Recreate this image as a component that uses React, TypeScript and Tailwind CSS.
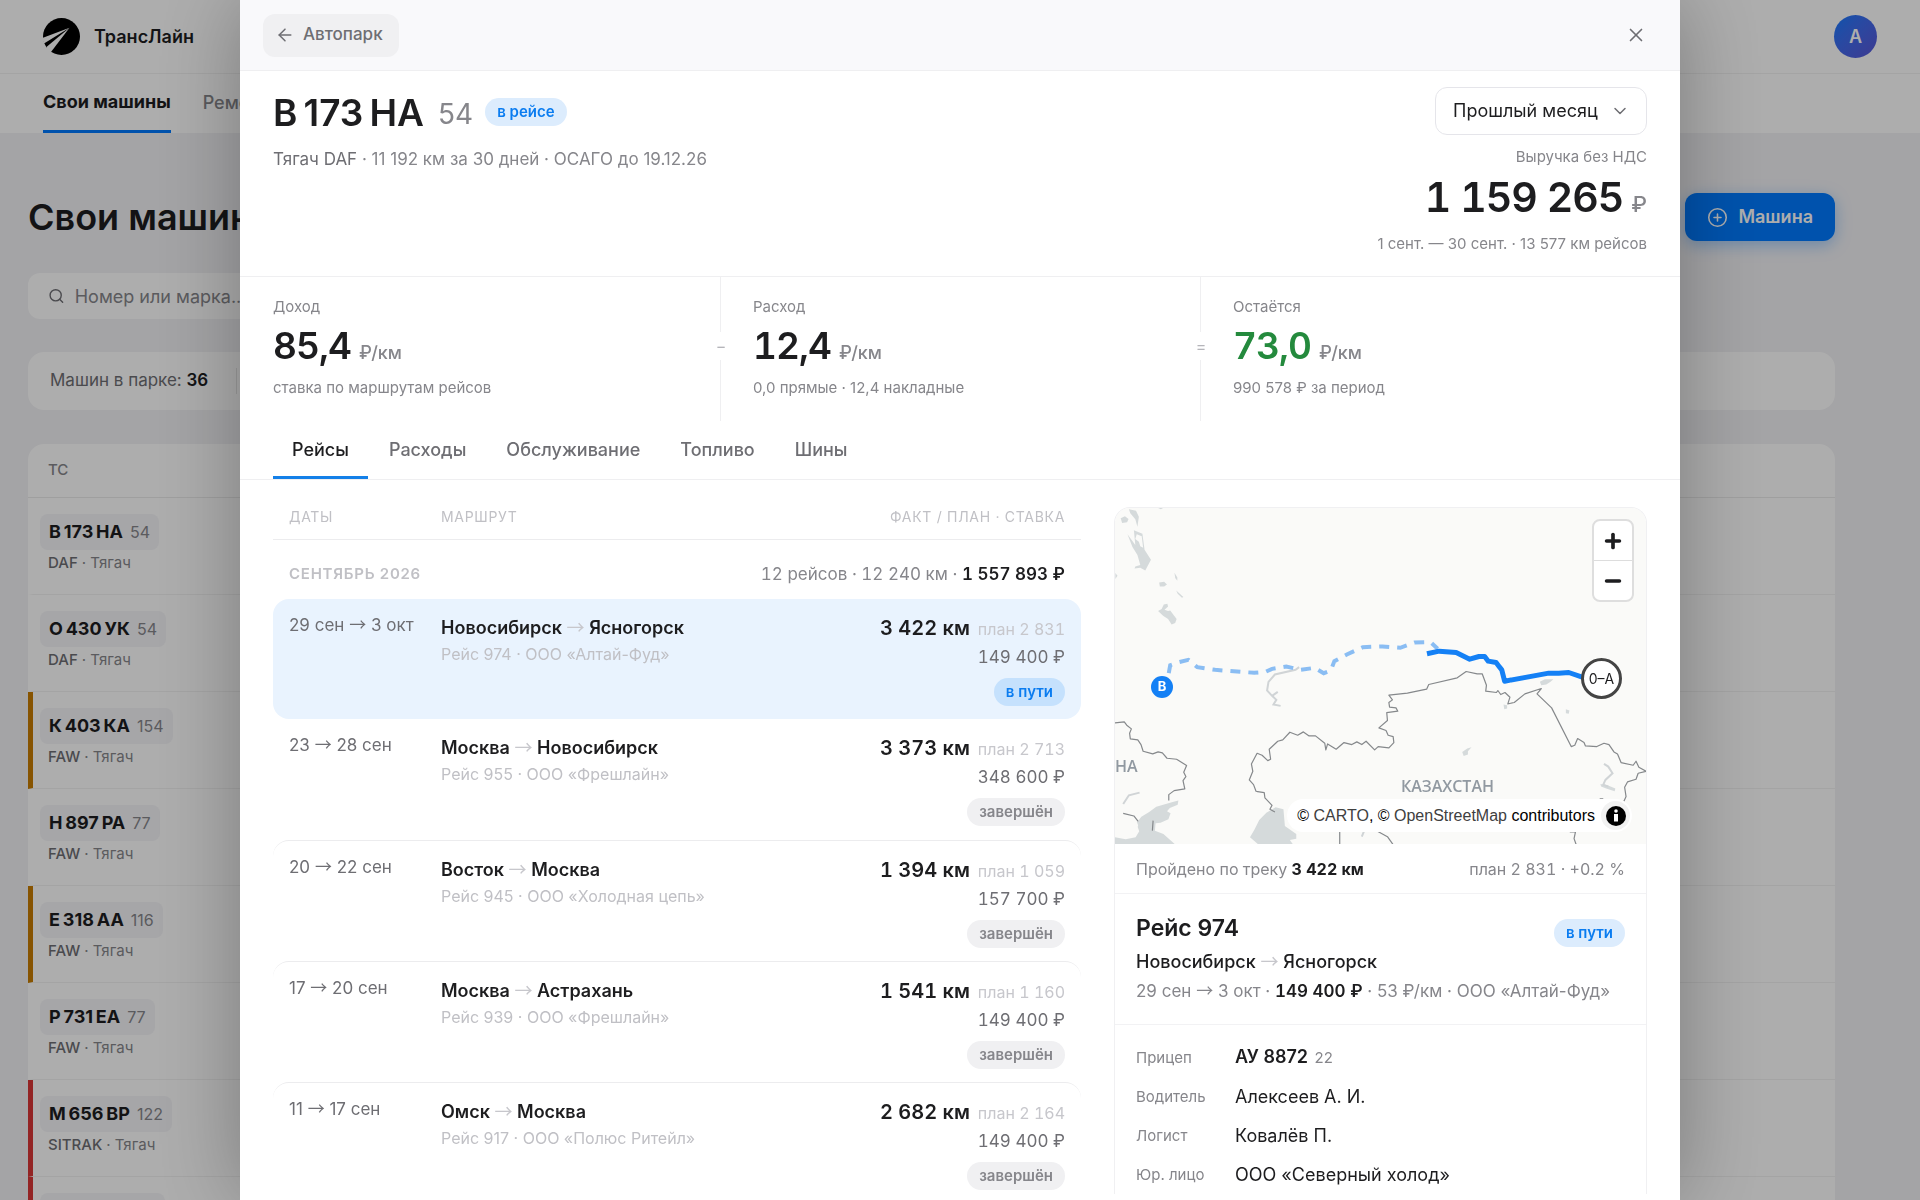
import { ArrowLeft, ChevronDown, CirclePlus, Minus, Plus, Search, X } from "lucide-react";

type Accent = "none" | "amber" | "red";

type Vehicle = {
  plate: string;
  region: string;
  brand: string;
  accent: Accent;
};

type Trip = {
  id: number;
  dates: [string, string];
  from: string;
  to: string;
  client: string;
  fact: string;
  plan: string;
  price: string;
  active?: boolean;
};

const vehicles: Vehicle[] = [
  { plate: "В\u2009173\u2009НА", region: "54", brand: "DAF", accent: "none" },
  { plate: "О\u2009430\u2009УК", region: "54", brand: "DAF", accent: "none" },
  { plate: "К\u2009403\u2009КА", region: "154", brand: "FAW", accent: "amber" },
  { plate: "Н\u2009897\u2009РА", region: "77", brand: "FAW", accent: "none" },
  { plate: "Е\u2009318\u2009АА", region: "116", brand: "FAW", accent: "amber" },
  { plate: "Р\u2009731\u2009ЕА", region: "77", brand: "FAW", accent: "none" },
  { plate: "М\u2009656\u2009ВР", region: "122", brand: "SITRAK", accent: "red" },
  { plate: "Т\u2009208\u2009ОС", region: "54", brand: "SITRAK", accent: "red" },
];

const trips: Trip[] = [
  { id: 974, dates: ["29 сен", "3 окт"], from: "Новосибирск", to: "Ясногорск", client: "ООО «Алтай-Фуд»", fact: "3 422", plan: "2 831", price: "149 400", active: true },
  { id: 955, dates: ["23", "28 сен"], from: "Москва", to: "Новосибирск", client: "ООО «Фрешлайн»", fact: "3 373", plan: "2 713", price: "348 600" },
  { id: 945, dates: ["20", "22 сен"], from: "Восток", to: "Москва", client: "ООО «Холодная цепь»", fact: "1 394", plan: "1 059", price: "157 700" },
  { id: 939, dates: ["17", "20 сен"], from: "Москва", to: "Астрахань", client: "ООО «Фрешлайн»", fact: "1 541", plan: "1 160", price: "149 400" },
  { id: 917, dates: ["11", "17 сен"], from: "Омск", to: "Москва", client: "ООО «Полюс Ритейл»", fact: "2 682", plan: "2 164", price: "149 400" },
];

const stats = [
  { label: "Доход", value: "85,4", note: "ставка по маршрутам рейсов", color: "text-[#1d1d1f]", sign: "" },
  { label: "Расход", value: "12,4", note: "0,0 прямые · 12,4 накладные", color: "text-[#1d1d1f]", sign: "−" },
  { label: "Остаётся", value: "73,0", note: "990 578 ₽ за период", color: "text-[#248a3d]", sign: "=" },
];

const tabs = ["Рейсы", "Расходы", "Обслуживание", "Топливо", "Шины"];

const accentBar: Record<Accent, string> = {
  none: "border-l-transparent",
  amber: "border-l-[#c77c02]",
  red: "border-l-[#d93636]",
};

function Logo() {
  return (
    <svg viewBox="0 0 37 37" className="size-[37px]" aria-hidden="true">
      <circle cx="18.5" cy="18.5" r="18.5" fill="#000" />
      <path d="M-1 20 26.500 9.800 1 25.500Z" fill="#fff" />
      <path d="M26.500 9.800 4 28.500 0 37 8 34Z" fill="#fff" />
    </svg>
  );
}

function Arrow({ muted }: { muted?: boolean }) {
  return (
    <span className={`font-['Noto_Sans_CJK_JP',sans-serif] leading-none font-normal ${muted ? "text-[#c7c7cc]" : ""}`}>→</span>
  );
}

function StatusBadge({ active, label, strong }: { active: boolean; label: string; strong?: boolean }) {
  const tone = active
    ? strong
      ? "bg-[#c5e1fd] text-[#0a7cf0]"
      : "bg-[#dcecfd] text-[#0a7cf0]"
    : "bg-[#f0f0f2] text-[#86868b]";
  return (
    <span className={`inline-flex h-7 items-center rounded-full px-3 text-[15px] font-semibold ${tone}`}>
      {label}
    </span>
  );
}

function FleetPage() {
  return (
    <div className="h-screen overflow-hidden bg-[#f2f2f5]">
      <header className="flex h-[74px] items-center justify-between border-b border-black/5 bg-white px-[43px]">
        <div className="flex items-center gap-3.5">
          <Logo />
          <span className="text-lg font-semibold">ТрансЛайн</span>
        </div>
        <button className="size-[43px] rounded-full bg-linear-135 from-[#007aff] to-[#5856d6] text-lg font-semibold text-white">
          А
        </button>
      </header>
      <nav className="flex h-[59px] gap-8 bg-white px-[43px] text-lg">
        <a href="#cars" className="flex items-center border-b-3 border-[#007aff] font-bold">Свои машины</a>
        <a href="#repairs" className="flex items-center pb-0.5 font-medium text-[#86868b]">Ремонты</a>
      </nav>

      <main className="pt-[60px] pr-[85px] pl-7">
        <div className="flex h-12 items-center justify-between">
          <h1 className="text-4xl font-semibold">Свои машины</h1>
          <button className="flex h-12 items-center gap-2.5 rounded-xl bg-[#007aff] px-[22px] text-lg font-semibold text-white shadow-[0_4px_16px_rgba(0,122,255,0.35)]">
            <CirclePlus className="size-[21px]" strokeWidth={1.8} />
            Машина
          </button>
        </div>
        <label className="mt-8 flex h-[46px] w-[420px] items-center gap-2.5 rounded-xl bg-white px-5">
          <Search className="size-[18px] text-[#6e6e73]" />
          <input
            type="search"
            aria-label="Поиск машины"
            placeholder="Номер или марка..."
            className="w-full pt-0.5 text-lg outline-none placeholder:text-[#86868b]"
          />
        </label>
        <div className="mt-[33px] flex h-[58px] items-center rounded-2xl bg-white px-[22px] text-[17px] text-[#6e6e73]">
          <span className="border-r border-black/10 pr-7">
            Машин в парке: <b className="font-semibold text-[#1d1d1f]">36</b>
          </span>
        </div>
        <table className="mt-[34px] w-full border-separate border-spacing-0 overflow-hidden rounded-t-2xl bg-white">
          <thead>
            <tr>
              <th className="h-[54px] border-b border-black/8 pl-5 text-left text-[15px] font-medium text-[#86868b]">ТС</th>
            </tr>
          </thead>
          <tbody>
            {vehicles.map((v) => (
              <tr key={v.plate}>
                <td className={`h-[97px] border-b border-l-5 border-b-black/5 pl-[7px] align-top ${accentBar[v.accent]}`}>
                  <span className="mt-4 inline-flex h-9 items-center gap-[7px] rounded-lg bg-[#f5f5f8] px-[9px]">
                    <span className="text-lg font-bold">{v.plate}</span>
                    <span className="text-base text-[#86868b]">{v.region}</span>
                  </span>
                  <div className="pl-2 text-[15px] leading-[26px] font-medium text-[#6e6e73]">
                    {v.brand} <span className="font-normal text-[#86868b]">· Тягач</span>
                  </div>
                </td>
              </tr>
            ))}
          </tbody>
        </table>
      </main>
    </div>
  );
}

function RouteMap() {
  return (
    <div className="relative h-[336px] overflow-hidden bg-[#fafaf8]">
      <svg viewBox="39 53 1491 1007" preserveAspectRatio="none" className="size-full" aria-label="Карта маршрута">
        {/* Lakes and seas */}
        <g fill="#d5dadb">
          <path d="M78 57l20 4 8 18-4 30-6-22-14-18zM55 84l12-6 10 8-4 10-14 2zM92 120l24 10 6 48 18 30-16 32-14-8-16 2 2-6 14-4-8-30-14-24-14-38 22 32zM163 276l14-2 8 8-8 6-12 0zM206 247l8 14 0 10-6-8zM211 300l20 20-4 2-12-12zM160 362l10-6 6-14 10-2 2 8-10 10 10 4 6-2 18 26-4 12-10 4-10-16-14-10zM40 248l6 8-6 10zM160 53l14 0-6 4z" />
          <path d="M39 1060V1040l30 6 28-6 10-18-8-24 14-20 22-14 20-16 46-14 16-4-2 12-22 10-8 10 10 6-6 18-22 10-14 2-2 22 24 10 42 40z" />
          <path d="M418 1040l12-22 14-30 20-22 26-16 22 6 4 50 32 24 0 14-18 4 8 12H440z" />
          <path d="M1232 574l14-8 24 0-8 8-12 8-14 2zM1130 642l10 2 0 10-8 2zM1305 656l10 4-2 10-8-2zM1014 784l14-10 12-4-10 12 0 10-12 4zM1402 880l20 4 22 10-2 8-24-8-14-6z" />
        </g>
        {/* White spots inside the water */}
        <path d="M100 132l14 6 4 34-8-4-4-14-10-8zM50 990l20-14 26 6 8 22-8 22-20 14-18-8 6-22z" fill="#fafaf8" />
        <g fill="none" stroke="#d0d4d6" strokeWidth="2">
          <path vectorEffect="non-scaling-stroke" d="M556 530l-10 8-58 14-18 22-4 26 14 16 12 12-8 14 20 4M480 616l16-12M62 940l16-26 30-8M1412 820l12 8 12 20-20 20-6 14 14 6M732 1038l6-16" />
        </g>
        {/* Borders */}
        <g fill="none" stroke="#85888b" strokeWidth="1.2" strokeLinejoin="round">
          <path
            vectorEffect="non-scaling-stroke"
            d="M39 697L65 694 72 704 85 715 80 728 82 745 103 748 112 762 118 782 145 790 160 784 172 787 185 803 212 806 240 825 232 845 238 858 230 870 235 895 205 900 190 912 190 930M62 968L92 976 104 992M146 990L144 1020"
          />
          <path
            vectorEffect="non-scaling-stroke"
            d="M488 964L474 956 480 944 460 922 458 906 435 902 428 882 416 868 426 842 422 820 438 788 452 794 468 810 476 806 472 776 496 752 510 748 530 725 552 734 568 724 584 736 602 736 628 758 631 778 636 760 660 776 682 756 704 762 718 754 732 762 744 752 768 778 778 768 808 772 822 756 820 738 806 734 800 720 780 712 804 690 802 666 833 662 828 652 810 650 808 636 818 628 808 614 860 608 914 596 920 582 1000 562 1025 543 1056 550 1070 550 1082 584 1080 602 1110 606 1114 600 1122 612 1134 606 1148 620 1142 640 1160 636 1190 610 1236 594 1224 610 1265 652 1320 768 1330 764 1338 744 1356 756 1360 766 1392 768 1412 758 1426 762 1440 784 1450 790 1460 816 1494 824 1502 812 1510 830 1530 842 1508 848 1502 866 1478 874 1470 890 1474 918 1468 932"
          />
          <path vectorEffect="non-scaling-stroke" d="M670 1022v40M776 1022l28 16 16 24M1316 1024h16l-4 20 6 18M1400 925h10" />
        </g>
        {/* Planned and driven track */}
        <path
          vectorEffect="non-scaling-stroke"
          d="M190 548L194 524 215 516 245 508 270 530 320 538 430 547 462 544 480 535 520 528 560 538 600 532 625 548 645 540 655 512 690 492 735 470 790 468 840 472 880 456 925 455 945 475"
          fill="none"
          stroke="#8abdf3"
          strokeWidth="4"
          strokeDasharray="10 8"
        />
        <path
          vectorEffect="non-scaling-stroke"
          d="M915 490l34-8 48 4 38 20 26-8 16 0 10 14 22 4 10 14 6 8 8 34 124-24 28 0 28-2 44 16"
          fill="none"
          stroke="#1480f5"
          strokeWidth="5"
          strokeLinejoin="round"
        />
      </svg>

      <span className="absolute top-[168px] left-9 flex size-[22px] items-center justify-center rounded-full bg-[#1480f5] text-[13px] font-bold text-white">B</span>
      <span className="absolute top-[150px] right-6 flex size-[41px] items-center justify-center rounded-full border-3 border-[#444] bg-white text-sm">0–A</span>
      <span className="absolute top-[246px] left-0 font-['Open_Sans',sans-serif] text-base font-semibold text-[#9199a1]">НА</span>
      <span className="absolute top-[266px] left-[286px] font-['Open_Sans',sans-serif] text-base font-semibold text-[#9199a1]">КАЗАХСТАН</span>

      <div className="absolute top-[11px] right-3 flex w-[42px] flex-col rounded-lg border-2 border-[#dedede] bg-white">
        <button aria-label="Приблизить" className="flex h-10 items-center justify-center border-b border-[#ddd]">
          <Plus className="size-[22px]" strokeWidth={4} />
        </button>
        <button aria-label="Отдалить" className="flex h-[39px] items-center justify-center">
          <Minus className="size-[22px]" strokeWidth={4} />
        </button>
      </div>

      <div className="absolute right-3.5 bottom-3 flex h-[33px] items-center gap-1.5 rounded-full bg-white pr-0.5 pl-2.5 font-['Liberation_Sans',sans-serif] text-base text-black">
        <span>
          © <a href="#carto" className="text-[#404040]">CARTO</a>, © <a href="#osm" className="text-[#404040]">OpenStreetMap</a> contributors
        </span>
        <span className="flex size-[29px] items-center justify-center rounded-full bg-[#f2f2f2]">
          <svg viewBox="0 0 20 20" className="size-5" aria-hidden="true">
            <circle cx="10" cy="10" r="10" />
            <circle cx="10" cy="5" r="1.8" fill="#fff" />
            <path d="M8 8h4v7.500h-4z" fill="#fff" />
          </svg>
        </span>
      </div>
    </div>
  );
}

function TripCard() {
  return (
    <aside className="overflow-hidden rounded-t-2xl border border-b-0 border-[#f0f0f2]">
      <RouteMap />
      <div className="flex h-[50px] items-center justify-between border-b border-[#f2f2f4] px-[21px] text-base text-[#86868b] tabular-nums">
        <span>
          Пройдено по треку <b className="font-bold text-[#1d1d1f]">3 422 км</b>
        </span>
        <span>план 2 831 · +0.2 %</span>
      </div>
      <div className="border-b border-[#f2f2f4] px-[21px] pt-4 pb-[18px]">
        <div className="flex items-end justify-between">
          <h2 className="text-[23px] leading-[37px] font-semibold">Рейс 974</h2>
          <StatusBadge active label="в пути" />
        </div>
        <div className="text-lg leading-[30px] font-medium">
          Новосибирск <Arrow muted /> Ясногорск
        </div>
        <div className="text-[17px] leading-[29px] whitespace-nowrap text-[#86868b]">
          29 сен <Arrow /> 3 окт · <b className="font-semibold text-[#1d1d1f] tabular-nums">149 400 ₽</b> · 53 ₽/км · ООО «Алтай-Фуд»
        </div>
      </div>
      <dl className="grid grid-cols-[99px_1fr] items-center px-[21px] pt-3 text-lg leading-[39px]">
        <dt className="text-[15px] text-[#86868b]">Прицеп</dt>
        <dd className="font-semibold">
          АУ 8872 <span className="ml-0.5 text-[15px] font-normal text-[#86868b]">22</span>
        </dd>
        <dt className="text-[15px] text-[#86868b]">Водитель</dt>
        <dd>Алексеев А. И.</dd>
        <dt className="text-[15px] text-[#86868b]">Логист</dt>
        <dd>Ковалёв П.</dd>
        <dt className="text-[15px] text-[#86868b]">Юр. лицо</dt>
        <dd>ООО «Северный холод»</dd>
      </dl>
    </aside>
  );
}

function TripsTable() {
  return (
    <table className="w-full table-fixed border-separate border-spacing-0">
      <colgroup>
        <col className="w-[152px]" />
        <col />
        <col className="w-[340px]" />
      </colgroup>
      <thead>
        <tr className="h-[33px] text-left align-top text-sm tracking-wider text-[#c0c0c5] uppercase">
          <th className="border-b border-[#ececee] pl-4 font-normal">Даты</th>
          <th className="border-b border-[#ececee] pl-4 font-normal">Маршрут</th>
          <th className="border-b border-[#ececee] pr-4 text-right font-normal">Факт / План · Ставка</th>
        </tr>
      </thead>
      <tbody>
        <tr className="h-[59px]">
          <td colSpan={2} className="pt-2.5 pl-4 text-[15px] font-semibold tracking-wider text-[#c0c0c5] uppercase">
            Сентябрь 2026
          </td>
          <td className="pt-2.5 pr-4 text-right text-[17px] whitespace-nowrap text-[#86868b] tabular-nums">
            12 рейсов · 12 240 км · <b className="font-semibold text-[#1d1d1f]">1 557 893 ₽</b>
          </td>
        </tr>
        {trips.map((trip, i) => {
          const cell = trip.active ? "bg-[#e9f3fe]" : i > 1 ? "border-t border-[#ececee]" : "";
          return (
            <tr key={trip.id} className={`align-top ${trip.active ? "h-[120px]" : "h-[121px]"}`}>
              <td className={`rounded-l-2xl pt-3.5 pl-4 text-[17px] leading-6 whitespace-nowrap text-[#6e6e73] ${cell}`}>
                {trip.dates[0]} <Arrow /> {trip.dates[1]}
              </td>
              <td className={`pt-4 pl-4 ${cell}`}>
                <div className="text-lg leading-[26px] font-semibold">
                  {trip.from} <Arrow muted /> {trip.to}
                </div>
                <div className="text-base leading-[26px] text-[#c0c0c5]">
                  Рейс {trip.id} · {trip.client}
                </div>
              </td>
              <td className={`rounded-r-2xl pt-3.5 pr-4 text-right tabular-nums ${cell}`}>
                <div className="leading-[30px] text-[#c7c7cc]">
                  <b className="mr-2 text-xl leading-[30px] font-semibold text-[#1d1d1f]">{trip.fact} км</b>
                  план {trip.plan}
                </div>
                <div className="mb-2 text-[17px] leading-[26px] text-[#6e6e73]">{trip.price} ₽</div>
                <StatusBadge active={!!trip.active} strong label={trip.active ? "в пути" : "завершён"} />
              </td>
            </tr>
          );
        })}
      </tbody>
    </table>
  );
}

function VehicleDialog() {
  return (
    <div className="fixed inset-0 flex justify-center bg-black/32">
      <div
        role="dialog"
        aria-modal="true"
        aria-label="В 173 НА 54"
        className="h-full w-3/4 overflow-hidden bg-white shadow-[0_0_80px_rgba(0,0,0,0.3)]"
      >
        <div className="flex h-[71px] items-center justify-between border-b border-[#efeff1] bg-[#f9f9fb] pr-[33px] pl-[23px]">
          <button className="flex h-[43px] items-center gap-2 rounded-xl bg-[#f0f0f2] px-3 pr-4 text-[17px] font-medium text-[#6e6e73]">
            <ArrowLeft className="size-5" strokeWidth={1.8} />
            Автопарк
          </button>
          <button aria-label="Закрыть" className="text-[#6e6e73]">
            <X className="size-[22px]" strokeWidth={1.8} />
          </button>
        </div>

        <div className="flex h-[206px] justify-between border-b border-[#efeff1] px-[33px] pt-4">
          <div className="pt-0.5">
            <div className="flex items-center">
              <h1 className="text-[37px] leading-[45px] font-semibold">В&#8201;173&#8201;НА</h1>
              <span className="ml-3.5 pt-1 text-[28px] text-[#86868b]">54</span>
              <span className="ml-3 flex">
                <StatusBadge active label="в рейсе" />
              </span>
            </div>
            <p className="mt-3 text-[17px] leading-6 text-[#86868b]">
              <span className="text-[#6e6e73]">Тягач DAF</span> · 11 192 км за 30 дней · ОСАГО до 19.12.26
            </p>
          </div>
          <div className="flex flex-col items-end text-[15px] text-[#86868b]">
            <div className="relative">
              <select
                aria-label="Период"
                className="h-12 w-[212px] appearance-none rounded-xl border border-[#e5e5ea] bg-white pl-[17px] text-lg text-[#1d1d1f]"
              >
                <option>Прошлый месяц</option>
                <option>Текущий месяц</option>
              </select>
              <ChevronDown className="pointer-events-none absolute top-3.5 right-[17px] size-5 text-[#6e6e73]" strokeWidth={1.8} />
            </div>
            <div className="mt-2.5 leading-6">Выручка без НДС</div>
            <div className="flex items-baseline gap-2 leading-[56px]">
              <span className="text-[41px] font-semibold tracking-tight text-[#1d1d1f] tabular-nums">1 159 265</span>
              <span className="text-[22px] font-medium">₽</span>
            </div>
            <div className="leading-6">1 сент. — 30 сент. · 13 577 км рейсов</div>
          </div>
        </div>

        <div className="grid h-36 grid-cols-3">
          {stats.map((s) => (
            <div key={s.label} className="relative border-l border-[#efeff1] pt-[18px] pl-8 text-[15px] text-[#86868b] first:border-l-transparent">
              {s.sign && (
                <span className="absolute top-[55px] -left-2 flex h-7 w-4 items-center justify-center bg-white text-base text-[#b5b5ba]">
                  {s.sign}
                </span>
              )}
              <div className="leading-6">{s.label}</div>
              <div className="flex items-baseline gap-2 leading-[54px]">
                <span className={`text-[37px] font-semibold tracking-tight tabular-nums ${s.color}`}>{s.value}</span>
                <span className="text-lg font-medium">₽/км</span>
              </div>
              <div className="leading-[30px]">{s.note}</div>
            </div>
          ))}
        </div>

        <div role="tablist" className="flex h-[59px] gap-0.5 border-b border-[#efeff1] px-[33px]">
          {tabs.map((tab, i) => (
            <button
              key={tab}
              role="tab"
              aria-selected={i === 0}
              className={`border-b-3 px-[19px] pt-0.5 text-lg font-medium ${
                i === 0 ? "border-[#1480e8] text-[#1d1d1f]" : "border-transparent text-[#6e6e73]"
              }`}
            >
              {tab}
            </button>
          ))}
        </div>

        <div className="grid grid-cols-[808fr_533fr] items-start gap-[33px] px-[33px] pt-[27px]">
          <TripsTable />
          <TripCard />
        </div>
      </div>
    </div>
  );
}

export default function App() {
  return (
    <div className="font-['Inter',sans-serif] text-[#1d1d1f]">
      <FleetPage />
      <VehicleDialog />
    </div>
  );
}
